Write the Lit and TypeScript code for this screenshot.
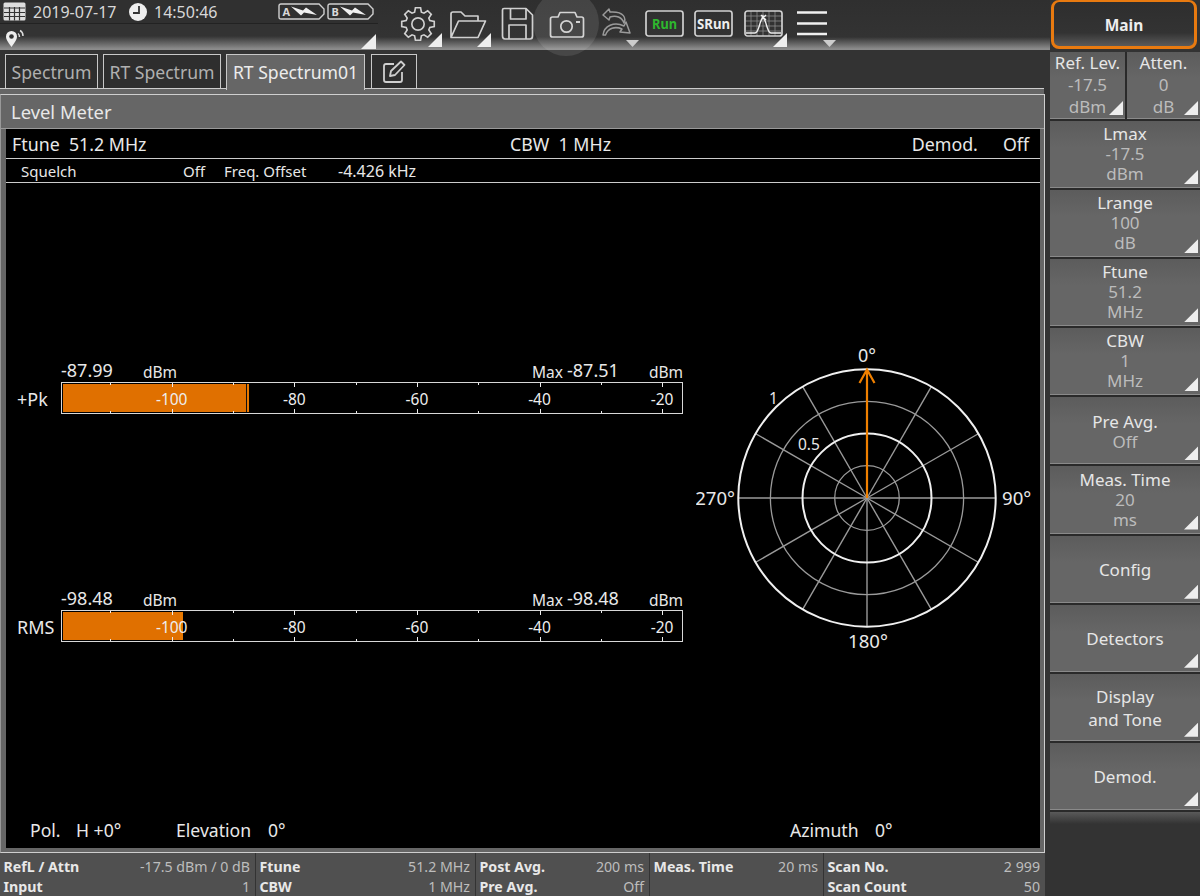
import { LitElement, html, css, svg } from "lit";
import { customElement } from "lit/decorators.js";

const gearPath = (() => {
  const cx = 17, cy = 17, teeth = 8, ro = 16, ri = 12;
  const pts: string[] = [];
  for (let i = 0; i < teeth; i++) {
    const a = (i * 2 * Math.PI) / teeth - Math.PI / 2;
    const step = (2 * Math.PI) / teeth;
    const list: [number, number][] = [
      [ri, a - step * 0.36],
      [ro, a - step * 0.2],
      [ro, a + step * 0.2],
      [ri, a + step * 0.36],
    ];
    for (const [r, t] of list) pts.push(`${(cx + r * Math.cos(t)).toFixed(1)} ${(cy + r * Math.sin(t)).toFixed(1)}`);
  }
  return "M" + pts.join(" L") + " Z";
})();

interface Meter { label: string; value: string; max: string; fill: number; peak: number; joined: boolean; }
const METERS: Meter[] = [
  { label: "+Pk", value: "-87.99", max: "-87.51", fill: 184, peak: 2, joined: false },
  { label: "RMS", value: "-98.48", max: "-98.48", fill: 117, peak: 3, joined: true },
];
const SCALE = [
  { t: "-100", x: 109.7 },
  { t: "-80", x: 232.3 },
  { t: "-60", x: 354.9 },
  { t: "-40", x: 477.5 },
  { t: "-20", x: 600.1 },
];
const TICKS = Array.from({ length: 10 }, (_, i) => ({ x: 48.4 + i * 61.3, major: i % 2 === 1 }));

const KEYS: { lines: string[]; kind?: string }[] = [
  { lines: ["Lmax", "-17.5", "dBm"] },
  { lines: ["Lrange", "100", "dB"] },
  { lines: ["Ftune", "51.2", "MHz"] },
  { lines: ["CBW", "1", "MHz"] },
  { lines: ["Pre Avg.", "Off"], kind: "low" },
  { lines: ["Meas. Time", "20", "ms"] },
  { lines: ["Config"], kind: "low" },
  { lines: ["Detectors"], kind: "low" },
  { lines: ["Display", "and Tone"], kind: "multi" },
  { lines: ["Demod."], kind: "low" },
];

const FOOT = [
  { cls: "f1", rows: [["RefL / Attn", "-17.5 dBm / 0 dB"], ["Input", "1"]] },
  { cls: "f2", rows: [["Ftune", "51.2 MHz"], ["CBW", "1 MHz"]] },
  { cls: "f3", rows: [["Post Avg.", "200 ms"], ["Pre Avg.", "Off"]] },
  { cls: "f4", rows: [["Meas. Time", "20 ms"], ["", ""]] },
  { cls: "f5", rows: [["Scan No.", "2 999"], ["Scan Count", "50"]] },
];

@customElement("app-root")
export class AppRoot extends LitElement {
  static styles = css`
    :host {
      display: grid;
      grid-template-columns: 1050px 150px;
      width: 1200px;
      height: 896px;
      overflow: hidden;
      background: #333;
      color: #e6e6e6;
      font-family: "Noto Sans", "Open Sans", sans-serif;
      font-size: 15.5px;
    }
    .left { display: flex; flex-direction: column; height: 896px; min-width: 0; }
    .top {
      height: 51px; flex: none; display: flex; position: relative;
      background: linear-gradient(#2f2f2f 0, #333 37px, #8c8c8c 49px, #8c8c8c 50px, #333 50px);
    }
    .status { width: 378px; flex: none; display: flex; flex-direction: column; background: #333; }
    .st1 {
      height: 23px; flex: none; display: flex; align-items: center; padding-left: 3px;
      color: #d8d8d8; font-size: 16px; border-bottom: 1px solid #222; background: #303030;
    }
    .st1 .date { margin-left: 7px; width: 96px; }
    .st1 .time { margin-left: 7px; width: 124px; }
    .st1 svg { flex: none; }
    .batt { margin-right: 2px; }
    .st2 {
      flex: 1; position: relative; padding: 5px 0 0 5px;
      background: linear-gradient(#333 0, #333 12px, #8c8c8c 25px, #8c8c8c 26px, #333 26px);
    }
    .tri {
      position: absolute; right: 2px; bottom: 3px; width: 14px; height: 14px;
      background: #eee; clip-path: polygon(100% 0, 100% 100%, 0 100%);
    }
    .st2 .tri { right: 2px; bottom: 3px; width: 15px; height: 15px; }
    .tools { display: flex; align-items: flex-start; padding-left: 22px; }
    .tool { position: relative; flex: none; height: 50px; box-sizing: border-box; }
    .tool svg { display: block; position: relative; z-index: 1; }
    .down {
      position: absolute; right: 0; top: 40px; width: 13px; height: 7px;
      background: #ccc; clip-path: polygon(0 0, 100% 0, 50% 100%);
    }
    .t-gear { width: 42px; padding-top: 6px; }
    .t-gear .tri { right: 0; bottom: 3px; }
    .t-folder { width: 42px; margin-left: 7px; padding-top: 10px; }
    .t-folder .tri { right: 0; bottom: 3px; }
    .t-save { width: 32px; margin-left: 10px; padding-top: 7px; }
    .t-cam { width: 35px; margin-left: 16px; padding-top: 10px; }
    .halo {
      position: absolute; left: -16px; top: -10px; width: 66px; height: 66px; border-radius: 50%;
      background: rgba(255, 255, 255, 0.1); z-index: 5; pointer-events: none;
    }
    .t-redo { width: 37px; margin-left: 18px; padding-top: 8px; }
    .t-run { width: 39px; margin-left: 6px; padding-top: 10px; }
    .t-srun { width: 40px; margin-left: 10px; padding-top: 10px; }
    .t-spec { width: 43px; margin-left: 10px; padding-top: 10px; }
    .t-spec .tri { right: 0; bottom: 3px; }
    .t-menu { width: 39px; margin-left: 10px; padding-top: 10px; }
    .runt { font-size: 13.5px; font-weight: 700; font-family: "Noto Sans", sans-serif; }

    .tabs {
      height: 38px; flex: none; display: flex; align-items: flex-start; padding: 3px 0 0 5px;
      box-sizing: border-box; position: relative; background: #333;
    }
    .tabs::after { content: ""; position: absolute; left: 0; right: 6px; bottom: 0; height: 1px; background: #ccc; }
    .tab {
      height: 35px; box-sizing: border-box; border: 1px solid #c8c8c8; border-bottom: none; margin-right: 5px;
      display: flex; align-items: center; justify-content: center; font-size: 17.6px; color: #b0b0b0; background: #2e2e2e;
    }
    .tw1 { width: 93px; }
    .tw2 { width: 118px; }
    .tab.on {
      width: 139px; height: 36px; padding-bottom: 1px; color: #ececec; background: #666; position: relative; z-index: 2;
      margin-right: 6px;
    }
    .tab.edit { width: 46px; }
    .band { height: 5px; flex: none; background: #666; margin-right: 6px; }
    .panel {
      flex: 1; min-height: 0; margin-right: 5px; background: #666; display: flex; flex-direction: column;
      border: 1px solid #cfcfcf; border-width: 1px 1px 1px 0;
      border-left: 1px solid #999;
    }
    .title {
      height: 34px; flex: none; display: flex; align-items: center; padding-left: 10px;
      font-size: 18.4px; color: #e8e8e8; border-bottom: 1px solid #999; box-sizing: border-box;
    }
    .screen {
      flex: 1; min-height: 0; background: #000; margin: 0 4px 4px 5px; display: flex; flex-direction: column;
      color: #e8e8e8;
    }
    .hdr {
      height: 30px; flex: none; display: flex; align-items: center; box-sizing: border-box;
      border-bottom: 1px solid #ccc; padding: 0 11px 0 6px; font-size: 17.8px;
    }
    .hdr .a { width: 498px; flex: none; }
    .hdr .d { margin-left: auto; }
    .hdr .o { margin-left: 25px; }
    .sub {
      height: 24px; flex: none; display: flex; align-items: center; box-sizing: border-box;
      border-bottom: 1px solid #ccc; font-size: 15px;
    }
    .sub span { flex: none; }
    .s1 { margin-left: 15px; width: 162px; }
    .s2 { width: 41px; }
    .s3 { width: 114px; }
    .s4 { font-size: 16px; }
    .body { flex: 1; min-height: 0; display: flex; }
    .meters { width: 690px; flex: none; padding: 179px 0 0 11px; box-sizing: border-box; display: flex; flex-direction: column; gap: 176px; }
    .meter { display: grid; grid-template-columns: 44px 622px; grid-template-rows: 20px 32px; }
    .mh { grid-column: 2; display: flex; align-items: flex-end; position: relative; line-height: 18px; white-space: nowrap; }
    .big { font-size: 18px; margin-bottom: 3px; }
    .unit1 { position: absolute; left: 82px; bottom: 1px; font-size: 15.5px; }
    .maxw { position: absolute; left: 471px; bottom: 1px; font-size: 15.5px; }
    .maxv { position: absolute; left: 506px; bottom: 3px; font-size: 18px; }
    .unit2 { position: absolute; right: 0; bottom: 1px; font-size: 15.5px; }
    .mlabel { display: flex; align-items: center; font-size: 18px; padding-top: 2px; }
    .bar { position: relative; border: 1px solid #d8d8d8; box-sizing: border-box; background: #000; height: 32px; }
    .fill { position: absolute; left: 1px; top: 1px; bottom: 1px; background: #e07000; border-right: 1px solid #111; box-sizing: border-box; }
    .fill.joined { border-right: none; }
    .peak { position: absolute; top: 1px; bottom: 1px; background: #e87800; }
    .tick { position: absolute; width: 1px; background: #eee; }
    .tick.t { top: 0; }
    .tick.b { bottom: 0; }
    .tick.maj { height: 4px; }
    .tick.min { height: 2px; }
    .sl { position: absolute; top: 1px; bottom: 0; display: flex; align-items: center; transform: translateX(-50%); font-size: 15.5px; color: #eee; }
    .polar { flex: 1; padding-top: 157px; box-sizing: border-box; }
    .polar svg { display: block; }
    .polar text { fill: #e8e8e8; font-family: "Noto Sans", sans-serif; font-size: 18px; }
    .polar text.big270 { font-size: 18.6px; }
    .polar text.sm { font-size: 15.5px; }
    .bot { height: 30px; flex: none; display: flex; align-items: flex-start; font-size: 17.6px; line-height: 24px; margin-top: 6px; }
    .bot span { flex: none; }
    .b1 { margin-left: 24px; width: 46px; }
    .b2 { width: 100px; }
    .b3 { width: 92px; }
    .b4 { width: 522px; }
    .b5 { width: 85px; }

    .foot { height: 43px; flex: none; display: flex; background: #505050; font-size: 14.2px; margin-right: 5px; }
    .fc { flex: none; box-sizing: border-box; border-right: 1px solid #333; padding: 3px 5px 0 3.5px; display: flex; flex-direction: column; }
    .fc:last-child { border-right: none; }
    .f1 { width: 256px; }
    .f2 { width: 220px; }
    .f3 { width: 174px; }
    .f4 { width: 174px; }
    .f5 { flex: 1; }
    .fr { height: 20px; display: flex; justify-content: space-between; align-items: center; }
    .fr b { font-weight: 700; color: #e8e8e8; }
    .fr i { font-style: normal; color: #bdbdbd; }

    .side { display: flex; flex-direction: column; min-width: 0; background: #2a2a2a; height: 896px; }
    .main-wrap { height: 52px; flex: none; background: #333; padding: 0 3px 3px 1px; box-sizing: border-box; }
    .main-btn {
      height: 49px; box-sizing: border-box; border: 3px solid #e87a10; border-top-width: 2px; border-radius: 8px;
      display: flex; align-items: center; justify-content: center; font-weight: 700; font-size: 15.5px; color: #eee;
      padding-top: 1px; background: linear-gradient(#2e2e2e, #333 70%, #5a5a5a);
    }
    .keys { display: flex; flex-direction: column; gap: 2px; }
    .key {
      height: 67.1px; flex: none; box-sizing: border-box; position: relative; display: flex; flex-direction: column;
      align-items: center; justify-content: center; line-height: 20px; color: #bcbcbc; font-size: 17px;
      background: linear-gradient(#5c5c5c, #666 40%, #666); border-bottom: 1px solid #8a8a8a; text-align: center;
    }
    .key .k0 { color: #e6e6e6; }
    .key.low { padding-top: 3px; }
    .key.multi { line-height: 23px; padding-top: 3px; }
    .key.multi span { color: #e6e6e6; }
    .split { display: flex; gap: 2px; height: 67px; flex: none; margin-bottom: 2px; }
    .split .key { flex: none; height: 67px; line-height: 22px; padding-bottom: 1px; }
    .split .w1 { width: 75px; }
    .split .w2 { width: 73px; }
    .rest { flex: 1; background: linear-gradient(#5a5a5a 0, #333 12px); margin-top: 2px; }
  `;

  private tri() { return html`<span class="tri"></span>`; }

  private polar() {
    const cx = 171, cy = 158;
    const spokes = Array.from({ length: 12 }, (_, i) => {
      const a = (i * Math.PI) / 6;
      return svg`<line x1=${cx} y1=${cy} x2=${cx + 129 * Math.sin(a)} y2=${cy - 129 * Math.cos(a)} stroke="#9a9a9a" stroke-width="1.4"/>`;
    });
    return html`<svg width="344" height="320" viewBox="0 0 344 320">
      ${spokes}
      <circle cx=${cx} cy=${cy} r="32.3" fill="none" stroke="#9a9a9a" stroke-width="1.3"/>
      <circle cx=${cx} cy=${cy} r="96.6" fill="none" stroke="#9a9a9a" stroke-width="1.3"/>
      <circle cx=${cx} cy=${cy} r="64.5" fill="none" stroke="#f0f0f0" stroke-width="2"/>
      <circle cx=${cx} cy=${cy} r="128.7" fill="none" stroke="#f0f0f0" stroke-width="2"/>
      <path d="M${cx} ${cy}V30M${cx - 7.5} 43L${cx} 29.5L${cx + 7.5} 43" fill="none" stroke="#f08000" stroke-width="2.2"/>
      <text x=${cx} y="22" text-anchor="middle">0°</text>
      <text class="big270" x="39" y="165" text-anchor="end">270°</text>
      <text class="big270" x="306" y="165">90°</text>
      <text class="big270" x="172" y="308" text-anchor="middle">180°</text>
      <text class="sm" x="73" y="64">1</text>
      <text class="sm" x="102" y="110">0.5</text>
    </svg>`;
  }

  private battery(l: string) {
    return html`<svg class="batt" width="47" height="17" viewBox="0 0 47 17">
      <path d="M3 1H41L46 6V11L41 16H3Q1 16 1 14V3Q1 1 3 1Z" fill="none" stroke="#d0d0d0" stroke-width="1.4"/>
      <text x="4.5" y="13" font-size="11" font-weight="700" fill="#d8d8d8" font-family="Noto Sans">${l}</text>
      <path d="M13 3.500L25 7.500L28 4.500L39 12L26 9.500L23 12.500Z" fill="#f0f0f0"/>
    </svg>`;
  }

  render() {
    return html`
      <div class="left">
        <div class="top">
          <div class="status">
            <div class="st1">
              <svg width="23" height="19" viewBox="0 0 23 19">
                <rect x="0.5" y="0.5" width="22" height="18" rx="1.5" fill="#ddd"/>
                <path d="M1 6H22M1 10.5H22M1 14.5H22M6.5 5V18.5M11.5 5V18.5M16.5 5V18.5" stroke="#333" stroke-width="1.2"/>
              </svg>
              <span class="date">2019-07-17</span>
              <svg width="18" height="18" viewBox="0 0 18 18">
                <circle cx="9" cy="9" r="9" fill="#eee"/>
                <path d="M10 3V10H4" fill="none" stroke="#333" stroke-width="1.8"/>
              </svg>
              <span class="time">14:50:46</span>
              ${this.battery("A")}${this.battery("B")}
            </div>
            <div class="st2">
              <svg width="20" height="18" viewBox="0 0 20 18">
                <path d="M6.5 18C3 13 1 10.5 1 7.5A5.5 5.5 0 0 1 12 7.5C12 10.5 10 13 6.5 18Z" fill="#eee"/>
                <circle cx="6.5" cy="7.5" r="2.3" fill="#333"/>
                <path d="M13 4.5Q14.5 5.5 14.5 8M15 1.5Q18 3 18 7" fill="none" stroke="#ddd" stroke-width="1.5"/>
              </svg>
              ${this.tri()}
            </div>
          </div>
          <div class="tools">
            <div class="tool t-gear">
              <svg width="36" height="36" viewBox="-0.5 -0.5 35 35" fill="none" stroke="#d0d0d0" stroke-width="1.6">
                <path d=${gearPath}/><circle cx="17" cy="17" r="6"/>
              </svg>${this.tri()}
            </div>
            <div class="tool t-folder">
              <svg width="38" height="30" viewBox="0 0 38 30" fill="none" stroke="#d0d0d0" stroke-width="1.7" stroke-linejoin="round">
                <path d="M2 27V4Q2 2 4 2H12L16 6H29V11M2 27.5H29L36.5 11H9.5L2 27.5Z"/>
              </svg>${this.tri()}
            </div>
            <div class="tool t-save">
              <svg width="33" height="33" viewBox="0 0 33 33" fill="none" stroke="#d0d0d0" stroke-width="1.7" stroke-linejoin="round">
                <path d="M3 1.5H25L31.5 8V29Q31.5 32 29 32H4Q1.5 32 1.5 29V3Q1.5 1.5 3 1.5Z"/>
                <path d="M9.5 2V12H25V2M8 32V18H25V32"/>
              </svg>
            </div>
            <div class="tool t-cam">
              <svg width="36" height="28" viewBox="0 0 36 28" fill="none" stroke="#d0d0d0" stroke-width="1.7" stroke-linejoin="round">
                <path d="M1.5 9Q1.5 7 3.5 7H9L11 2.5H26L28 7H32.5Q34.5 7 34.5 9V25Q34.5 27 32.5 27H3.5Q1.5 27 1.5 25Z"/>
                <circle cx="17.5" cy="16.5" r="5.7"/><path d="M27 12H31" stroke-width="2"/>
              </svg>
              <span class="halo"></span>
            </div>
            <div class="tool t-redo">
              <svg width="30" height="30" viewBox="0 0 30 30" fill="none" stroke="#9a9a9a" stroke-width="1.5" stroke-linejoin="round">
                <path d="M7 1L1 7L7 12L8 9C14 7 20 9 22 15C24 11 23 3 8 4Z"/>
                <path d="M1 27C2 18 12 13 22 18L24 14L28 25L18 24L20 21C13 18 6 20 3.500 27Z"/>
              </svg>
              <span class="down"></span>
            </div>
            <div class="tool t-run">
              <svg width="39" height="27" viewBox="0 0 39 27">
                <rect x="1" y="1" width="37" height="25" rx="2.5" fill="none" stroke="#d0d0d0" stroke-width="1.7"/>
                <text class="runt" x="19.5" y="18.500" text-anchor="middle" fill="#2eb82e" textLength="25" lengthAdjust="spacingAndGlyphs">Run</text>
              </svg>
            </div>
            <div class="tool t-srun">
              <svg width="39" height="27" viewBox="0 0 39 27">
                <rect x="1" y="1" width="37" height="25" rx="2.5" fill="none" stroke="#d0d0d0" stroke-width="1.7"/>
                <text class="runt" x="19.5" y="18.500" text-anchor="middle" fill="#eee" textLength="33" lengthAdjust="spacingAndGlyphs">SRun</text>
              </svg>
            </div>
            <div class="tool t-spec">
              <svg width="39" height="27" viewBox="0 0 39 27">
                <path d="M7 1V26M13 1V26M19 1V26M25 1V26M31 1V26M1 6H38M1 11H38M1 16H38M1 21H38" stroke="#8a8a8a" stroke-width="0.8"/>
                <rect x="1" y="1" width="37" height="25" rx="2.5" fill="none" stroke="#d0d0d0" stroke-width="1.7"/>
                <path d="M2 23H11C14 23 15 16 16.500 12L19 6L21.500 12C23 16 24 23 27 23H37M17 5L22 10M22 5L17 10" fill="none" stroke="#eee" stroke-width="1.4"/>
              </svg>${this.tri()}
            </div>
            <div class="tool t-menu">
              <svg width="31" height="27" viewBox="0 0 31 27">
                <path d="M0 2.500H30M0 13.500H30M0 24H30" stroke="#f0f0f0" stroke-width="2.6"/>
              </svg>
              <span class="down"></span>
            </div>
          </div>
        </div>
        <div class="tabs">
          <div class="tab tw1">Spectrum</div>
          <div class="tab tw2">RT Spectrum</div>
          <div class="tab on">RT Spectrum01</div>
          <div class="tab edit">
            <svg width="24" height="24" viewBox="0 0 24 24" fill="none" stroke="#cfcfcf" stroke-width="1.8" stroke-linejoin="round">
              <path d="M12 4H4Q2 4 2 6V20Q2 22 4 22H18Q20 22 20 20V12"/>
              <path d="M8 16L9 11L19 1.500L22.500 5L13 15Z"/>
            </svg>
          </div>
        </div>
        <div class="band"></div>
        <div class="panel">
          <div class="title">Level Meter</div>
          <div class="screen">
            <div class="hdr">
              <span class="a">Ftune&nbsp; 51.2 MHz</span>
              <span>CBW&nbsp; 1 MHz</span>
              <span class="d">Demod.</span>
              <span class="o">Off</span>
            </div>
            <div class="sub">
              <span class="s1">Squelch</span><span class="s2">Off</span>
              <span class="s3">Freq. Offset</span><span class="s4">-4.426 kHz</span>
            </div>
            <div class="body">
              <div class="meters">
                ${METERS.map((m) => html`
                  <div class="meter">
                    <div class="mh">
                      <span class="big">${m.value}</span>
                      <span class="unit1">dBm</span>
                      <span class="maxw">Max</span>
                      <span class="maxv">${m.max}</span>
                      <span class="unit2">dBm</span>
                    </div>
                    <div class="mlabel">${m.label}</div>
                    <div class="bar">
                      <div class="fill ${m.joined ? "joined" : ""}" style="width:${m.fill}px"></div>
                      <div class="peak" style="left:${m.fill + 1}px;width:${m.peak}px"></div>
                      ${TICKS.map((t) => html`
                        <span class="tick t ${t.major ? "maj" : "min"}" style="left:${t.x}px"></span>
                        <span class="tick b ${t.major ? "maj" : "min"}" style="left:${t.x}px"></span>`)}
                      ${SCALE.map((s) => html`<span class="sl" style="left:${s.x}px">${s.t}</span>`)}
                    </div>
                  </div>`)}
              </div>
              <div class="polar">${this.polar()}</div>
            </div>
            <div class="bot">
              <span class="b1">Pol.</span><span class="b2">H +0°</span>
              <span class="b3">Elevation</span><span class="b4">0°</span>
              <span class="b5">Azimuth</span><span>0°</span>
            </div>
          </div>
        </div>
        <div class="foot">
          ${FOOT.map((c) => html`
            <div class="fc ${c.cls}">
              ${c.rows.map((r) => html`<div class="fr"><b>${r[0]}</b><i>${r[1]}</i></div>`)}
            </div>`)}
        </div>
      </div>
      <div class="side">
        <div class="main-wrap"><div class="main-btn">Main</div></div>
        <div class="split">
          <div class="key w1"><span class="k0">Ref. Lev.</span><span>-17.5</span><span>dBm</span>${this.tri()}</div>
          <div class="key w2"><span class="k0">Atten.</span><span>0</span><span>dB</span>${this.tri()}</div>
        </div>
        <div class="keys">
          ${KEYS.map((k) => html`
            <div class="key ${k.kind ?? ""}">
              ${k.lines.map((l, i) => html`<span class=${i === 0 ? "k0" : ""}>${l}</span>`)}
              ${this.tri()}
            </div>`)}
        </div>
        <div class="rest"></div>
      </div>
    `;
  }
}
